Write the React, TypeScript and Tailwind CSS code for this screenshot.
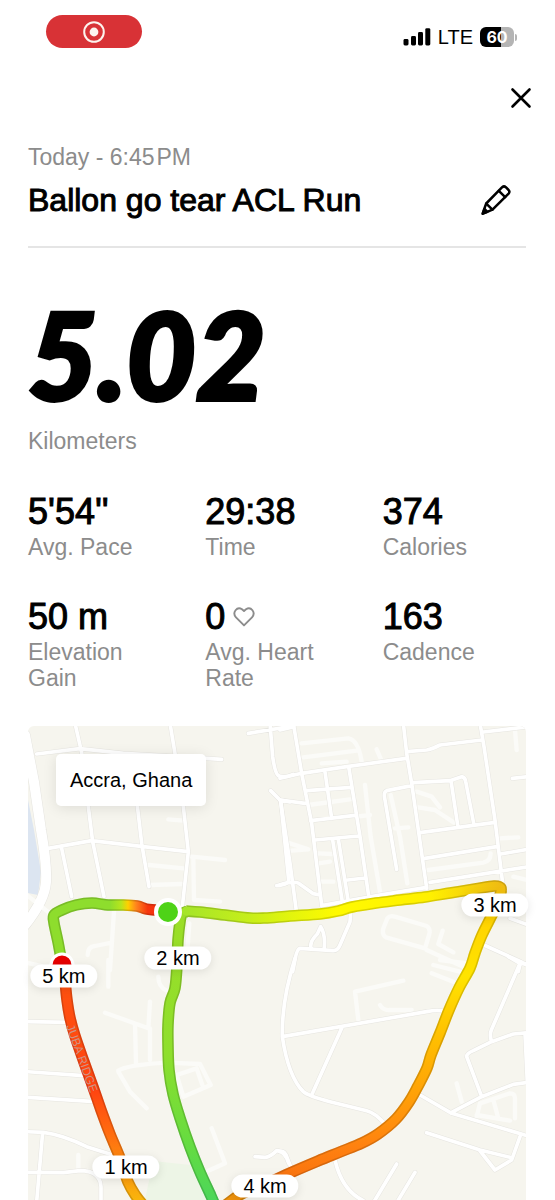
import React from "react";

type Tile = { x: number; y: number; roads: string; lanes: string };
type Point = [number, number];

// Street geometry, stored in four map tiles at three units to the pixel.
const tiles: Tile[] = [
  {
    x: 20,
    y: 720,
    roads:
      "M50 102L180 86L310 100L480 110L605 118 M165 10L185 98L205 260L218 365L252 530 M450 10L465 100L490 260L505 395L487 560 M350 240L365 370L387 500 M85 385L215 362L370 380L505 395 M125 385L155 530 M685 40L820 18 M750 10L758 110Q765 160 775 167Q790 176 820 163 M752 212L780 240L810 246 M782 240L806 480Q806 494 770 497",
    lanes:
      "M445 298L490 302 M387 435L490 445 M390 495L485 492 M515 410L615 420 M520 415L522 540L600 545 M283 560L270 750 M203 705Q203 680 225 678L275 668 M508 610L503 680 M20 525L90 580",
  },
  {
    x: 280,
    y: 720,
    roads:
      "M0 30L42 20 M40 10L65 160L95 310L125 555 M0 175L65 160L200 140L378 115 M370 10L380 100L395 190L440 505 M380 95L440 90Q455 88 480 75L605 60 M600 10L612 80L645 300L668 490 M610 36L745 20 M80 212L215 202 M135 155L155 295 M206 140L240 350L267 535 M92 302L225 286 M105 360L235 348 M158 360L187 545 M175 358L205 545 M203 480L255 474 M125 557L300 525L440 502 M450 487L745 440 M435 415L650 380 M662 402L745 388 M420 338L640 308 M400 188L510 182L545 170Q555 172 557 184L582 315 M513 182L533 315 M395 197L320 212Q309 216 315 240L350 448 M697 175L745 170 M0 240L75 250 M2 245L30 430L50 580 M0 494Q50 480 60 493L100 521L120 525 M212 575L210 605L180 675Q173 692 160 692L60 685Q50 688 45 720L38 755 M93 685Q88 665 112 642L122 620Q138 645 132 690 M605 672L722 725L745 738 M690 595L745 615 M722 725L715 755",
    lanes:
      "M65 70L205 55Q235 60 245 125 M70 112L230 92 M290 88L303 118 M125 130L200 125 M255 195L272 350L300 515 M332 225L360 350L382 490 M345 325L385 322 M410 215L455 230L480 262 M415 262L465 270L522 308 M445 450L610 428Q632 424 632 400 M660 355L715 352 M705 30L710 90 M30 370L85 388L35 392 M115 400L155 402 M115 430L150 425 M230 290L270 285 M85 255L210 238 M120 485L160 485 M345 590L440 618Q452 625 448 642L435 685L318 652Q305 645 310 625L322 595Q330 585 345 590Z M440 690L550 740 M488 632L475 672L520 697 M700 470L740 480",
  },
  {
    x: 20,
    y: 960,
    roads:
      "M20 185L150 187 M20 335L190 347 M20 412L225 425 M20 515L70 517Q130 525 200 560L300 592 M68 517L50 725 M20 637L130 638L180 632Q240 632 243 680L243 725 M705 590L735 592Q750 592 770 572Q795 572 806 610",
    lanes:
      "M255 158L385 205L390 125 M390 205L390 300 M345 190L348 310 M295 332Q320 315 440 308L540 312L572 375L490 410L470 345L530 325L547 375 M295 335L330 395L380 445 M575 505L615 610L565 632 M265 0L265 80 M415 50Q415 80 440 92 M175 585L175 625 M20 8L65 18",
  },
  {
    x: 280,
    y: 960,
    roads:
      "M45 -5Q5 120 7 230Q25 350 70 395Q85 408 150 425L260 452Q285 458 315 492 M7 230L440 155Q475 148 495 155 M185 205L95 405 M420 405L515 460L745 528 M515 457L605 410L700 373L745 367 M605 410L560 290Q560 280 580 272L635 245L700 222L745 218 M735 220L742 367 M635 245Q628 225 634 210L720 10L745 12 M685 -10L720 10 M440 518L600 570L690 592 M598 570L645 630L695 600L720 530 M350 612L282 725 M405 637L352 725 M165 600Q185 690 250 722 M0 575Q15 570 22 595L38 635",
    lanes:
      "M370 62L225 95L235 180 M300 135Q310 152 330 150L395 150 M530 370L545 425 M455 40L520 65 M460 15L540 35 M480 0L560 10 M590 470L600 430L690 400Q705 400 705 415L705 475 M590 465L690 482 M640 420L655 475",
  },
];

const segments: { paint: string; points: Point[] }[] = [
  {
    paint: "url(#climb)",
    points: [[216, 1208], [211, 1196], [200, 1172], [190, 1147], [180, 1118], [173, 1094], [169, 1070], [168, 1045], [168, 1025], [170, 1003], [175, 988], [177, 965], [178, 940], [180, 922], [182, 914], [188, 911]],
  },
  {
    paint: "url(#north)",
    points: [[186, 911], [200, 912], [225, 915], [250, 918], [265, 918], [290, 916], [320, 914], [338, 911], [352, 907], [376, 903], [400, 900], [425, 897], [450, 893], [475, 889], [494, 886], [501, 888], [500, 896]],
  },
  {
    paint: "url(#east)",
    points: [[501, 890], [499, 900], [492, 915], [482, 935], [475, 953], [470, 968], [459, 988], [449, 1010], [440, 1033], [431, 1055], [427, 1068], [418, 1086], [409, 1102], [396, 1119], [378, 1134], [362, 1143], [340, 1152], [318, 1161], [290, 1173], [262, 1186]],
  },
  { paint: "#ee920d", points: [[264, 1185], [250, 1190], [238, 1196], [222, 1208]] },
  {
    paint: "url(#finish)",
    points: [[168, 911], [155, 910], [146, 909], [137, 906], [122, 905], [108, 905], [92, 903], [76, 905], [62, 910], [54, 915], [54, 923], [58, 942], [62, 964]],
  },
  {
    paint: "url(#start)",
    points: [[65, 980], [67, 1000], [70, 1018], [75, 1036], [84, 1062], [93, 1087], [101, 1110], [110, 1134], [120, 1158], [128, 1182], [136, 1196], [144, 1206]],
  },
];

const route = segments.map(({ paint, points }) => ({ paint, d: smooth(points) }));

// Catmull-Rom spline through the recorded positions.
function smooth(points: Point[]) {
  let d = `M${points[0][0]} ${points[0][1]}`;
  for (let i = 0; i < points.length - 1; i++) {
    const a = points[i - 1] ?? points[i];
    const b = points[i];
    const c = points[i + 1];
    const e = points[i + 2] ?? c;
    d += `C${b[0] + (c[0] - a[0]) / 6} ${b[1] + (c[1] - a[1]) / 6} ${c[0] - (e[0] - b[0]) / 6} ${c[1] - (e[1] - b[1]) / 6} ${c[0]} ${c[1]}`;
  }
  return d;
}

const pins = [
  { label: "1 km", place: "left-[19.7%] top-[93%]" },
  { label: "2 km", place: "left-[30.1%] top-[49%]" },
  { label: "3 km", place: "left-[93.8%] top-[37.8%]" },
  { label: "4 km", place: "left-[47.6%] top-[97%]" },
  { label: "5 km", place: "left-[7.2%] top-[52.7%]" },
];

const stats = [
  { value: "5'54''", label: "Avg. Pace" },
  { value: "29:38", label: "Time" },
  { value: "374", label: "Calories" },
  { value: "50 m", label: "Elevation Gain" },
  { value: "0", label: "Avg. Heart Rate", heart: true },
  { value: "163", label: "Cadence" },
];

function StatusBar() {
  return (
    <div className="flex items-start justify-between pt-[15px] pr-[38px] pl-[46px]">
      <div className="flex h-[33px] w-24 items-center justify-center rounded-full bg-[#d83236]">
        <svg viewBox="0 0 24 24" className="size-6" aria-label="Recording">
          <circle cx="12" cy="12" r="9.8" fill="none" stroke="#fdf3ee" strokeWidth="2" />
          <circle cx="12" cy="12" r="4.4" fill="#fdf3ee" />
        </svg>
      </div>
      <div className="flex items-center gap-[7px] pt-2">
        <svg viewBox="0 0 28 18" className="h-[18px] w-7" aria-label="Signal">
          <rect x="0.5" y="11" width="5" height="6.5" rx="1.4" />
          <rect x="8" y="8" width="5" height="9.5" rx="1.4" />
          <rect x="15" y="4" width="5" height="13.5" rx="1.4" />
          <rect x="22.3" y="0.2" width="5" height="17.3" rx="1.4" />
        </svg>
        <span className="text-[20px] leading-7 font-normal">LTE</span>
        <div className="flex items-center gap-px">
          <div className="flex h-5 w-[34px] items-center justify-center rounded-[6px] bg-linear-to-r from-black from-62% to-[#b4b4b4] to-62% font-[Inter,sans-serif] text-[16px] font-bold text-white">
            60
          </div>
          <div className="h-[7px] w-[2px] rounded-r-full bg-[#b4b4b4]" />
        </div>
      </div>
    </div>
  );
}

function RouteMap() {
  return (
    <section aria-label="Route map" className="relative mt-[35px]">
      <svg viewBox="28 726 498 474" className="block w-full rounded-t-md">
        <defs>
          <linearGradient id="climb" gradientUnits="userSpaceOnUse" x1="0" y1="910" x2="0" y2="1200">
            <stop offset="0" stopColor="#9cde27" />
            <stop offset=".5" stopColor="#8edf2d" />
            <stop offset=".8" stopColor="#66dc40" />
            <stop offset="1" stopColor="#4cd65a" />
          </linearGradient>
          <linearGradient id="north" gradientUnits="userSpaceOnUse" x1="186" y1="0" x2="500" y2="0">
            <stop offset="0" stopColor="#a6e529" />
            <stop offset=".2" stopColor="#c6ee1a" />
            <stop offset=".34" stopColor="#e4f50c" />
            <stop offset=".48" stopColor="#fffa00" />
            <stop offset=".78" stopColor="#fff000" />
            <stop offset="1" stopColor="#efbc12" />
          </linearGradient>
          <linearGradient id="east" gradientUnits="userSpaceOnUse" x1="0" y1="886" x2="0" y2="1186">
            <stop offset="0" stopColor="#efbc12" />
            <stop offset=".12" stopColor="#ffd400" />
            <stop offset=".3" stopColor="#ffe400" />
            <stop offset=".5" stopColor="#ffc000" />
            <stop offset=".7" stopColor="#ffa008" />
            <stop offset=".87" stopColor="#ff8110" />
            <stop offset="1" stopColor="#f8700f" />
          </linearGradient>
          <linearGradient id="finish" gradientUnits="userSpaceOnUse" x1="110" y1="0" x2="160" y2="0">
            <stop offset="0" stopColor="#8edd2d" />
            <stop offset=".22" stopColor="#b7e51d" />
            <stop offset=".36" stopColor="#ffd000" />
            <stop offset=".52" stopColor="#ff861d" />
            <stop offset=".75" stopColor="#f6380e" />
            <stop offset="1" stopColor="#f52c10" />
          </linearGradient>
          <linearGradient id="start" gradientUnits="userSpaceOnUse" x1="0" y1="980" x2="0" y2="1200">
            <stop offset="0" stopColor="#ff5210" />
            <stop offset=".5" stopColor="#ff4411" />
            <stop offset=".7" stopColor="#ff6d10" />
            <stop offset="1" stopColor="#f9b50c" />
          </linearGradient>
        </defs>
        <rect x="28" y="726" width="498" height="474" fill="#f6f5ee" />
        <path d="M28 800L34 830L41 872L38 895L28 893Z" fill="#dce5f1" />
        <path d="M153 1161L200 1166L212 1200H145Z" fill="#edf5e6" />
        <g fill="none" strokeLinecap="round" strokeLinejoin="round">
          <path d="M25 735L34 782L41 830Q47 865 46 882Q45 900 25 925" stroke="#e5e4df" strokeWidth="11" />
          {tiles.map((t) => (
            <g key={`${t.x}-${t.y}`} transform={`translate(${t.x} ${t.y}) scale(${1 / 3})`}>
              <path d={t.lanes} stroke="#fbfbf8" strokeWidth="13" />
              <path d={t.roads} stroke="#e6e5e0" strokeWidth="14" />
            </g>
          ))}
          {tiles.map((t) => (
            <g key={`${t.x}-${t.y}`} transform={`translate(${t.x} ${t.y}) scale(${1 / 3})`}>
              <path d={t.roads} stroke="#ffffff" strokeWidth="11" />
            </g>
          ))}
          <path d="M25 735L34 782L41 830Q47 865 46 882Q45 900 25 925" stroke="#ffffff" strokeWidth="10" />
        </g>
        <g fill="none" strokeLinejoin="round">
          {route.map((s) => (
            <g key={s.d}>
              <path d={s.d} stroke={s.paint} strokeWidth="11.5" />
              <path d={s.d} stroke="#000" strokeOpacity=".15" strokeWidth="11.5" />
            </g>
          ))}
          {route.map((s) => (
            <path key={s.d} d={s.d} stroke={s.paint} strokeWidth="8.4" strokeLinecap="round" />
          ))}
        </g>
        <path id="ridge" d="M66 1026L94 1104" fill="none" />
        <text fill="#cf9384" fontSize="12" fontFamily="Liberation Sans, sans-serif">
          <textPath href="#ridge">JUBA RIDGE</textPath>
        </text>
        <circle cx="62" cy="965" r="11" fill="#e60000" stroke="#fff" strokeWidth="3" />
        <circle cx="168" cy="912" r="12" fill="#4ed317" stroke="#fff" strokeWidth="4" />
      </svg>
      <div className="absolute top-7 left-7 rounded-[5px] bg-white px-[14px] py-[13px] text-[20px] leading-[26px] shadow-[0_2px_14px_rgba(0,0,0,0.10)]">
        Accra, Ghana
      </div>
      {pins.map((p) => (
        <span
          key={p.label}
          className={`absolute -translate-x-1/2 -translate-y-1/2 rounded-full bg-white px-3 text-[20px] leading-[23px] whitespace-nowrap shadow-[0_2px_10px_rgba(0,0,0,0.10)] ${p.place}`}
        >
          {p.label}
        </span>
      ))}
    </section>
  );
}

export default function App() {
  return (
    <main className="min-h-screen overflow-x-hidden bg-white font-['Liberation_Sans',Arial,sans-serif] text-black">
      <StatusBar />
      <div className="mt-[35px] flex justify-end pr-[22px]">
        <button type="button" aria-label="Close" className="block">
          <svg viewBox="0 0 24 24" className="size-6" fill="none" stroke="currentColor" strokeWidth="2.6" strokeLinecap="round">
            <path d="M3.5 3.5L20.5 20.5M20.5 3.5L3.5 20.5" />
          </svg>
        </button>
      </div>
      <div className="pr-[29px] pl-7">
        <header className="mt-[34px] border-b-2 border-[#e5e5e5] pb-7">
          <p className="text-[23px] leading-[26px] text-[#8c8c8c]">Today - 6:45&#8202;PM</p>
          <div className="mt-3 flex items-center justify-between pr-3">
            <h1 className="text-[32px] leading-9 font-normal [-webkit-text-stroke:1px_black]">Ballon go tear ACL Run</h1>
            <button type="button" aria-label="Edit title" className="block">
              <svg viewBox="0 0 36 36" className="size-9" fill="none" stroke="currentColor" strokeWidth="2.5" strokeLinejoin="round" strokeLinecap="round">
                <path d="M4.500 31.800L8.200 21.500L24.200 5.200Q26 3.600 27.800 5.200L30.600 8Q32.200 9.800 30.600 11.600L14.500 27.700Z" />
                <path d="M20.800 8.800L27.200 15.200M8.300 21.600L14.400 27.600" />
                <path d="M5 31.200L6.500 27L9.300 29.800Z" fill="currentColor" />
              </svg>
            </button>
          </div>
        </header>
        <section aria-label="Distance" className="pt-12">
          <p className="font-[Lato,sans-serif] text-[120px] leading-[116px] font-black italic [-webkit-text-stroke:4px_black]">5.02</p>
          <p className="mt-4 text-[23px] leading-[26px] text-[#8c8c8c]">Kilometers</p>
        </section>
        <dl className="mt-[38px] grid grid-cols-3 gap-x-[34px] gap-y-[37px]">
          {stats.map((s) => (
            <div key={s.label} className="flex flex-col-reverse justify-end">
              <dt className="text-[23px] leading-[26px] text-[#8c8c8c]">{s.label}</dt>
              <dd className="flex h-[42px] items-center gap-2 pb-[2px] text-[36px] leading-10 whitespace-nowrap [-webkit-text-stroke:1px_black]">
                {s.value}
                {s.heart && (
                  <svg viewBox="0 0 22 22" className="size-[22px]" fill="none" stroke="#8c8c8c" strokeWidth="1.9" strokeLinejoin="round">
                    <path d="M11 19.400L3 11.400C-1.200 6.400 4 0 9 3.200L11 5L13 3.200C18 0 23.200 6.400 19 11.400Z" />
                  </svg>
                )}
              </dd>
            </div>
          ))}
        </dl>
        <RouteMap />
      </div>
    </main>
  );
}
